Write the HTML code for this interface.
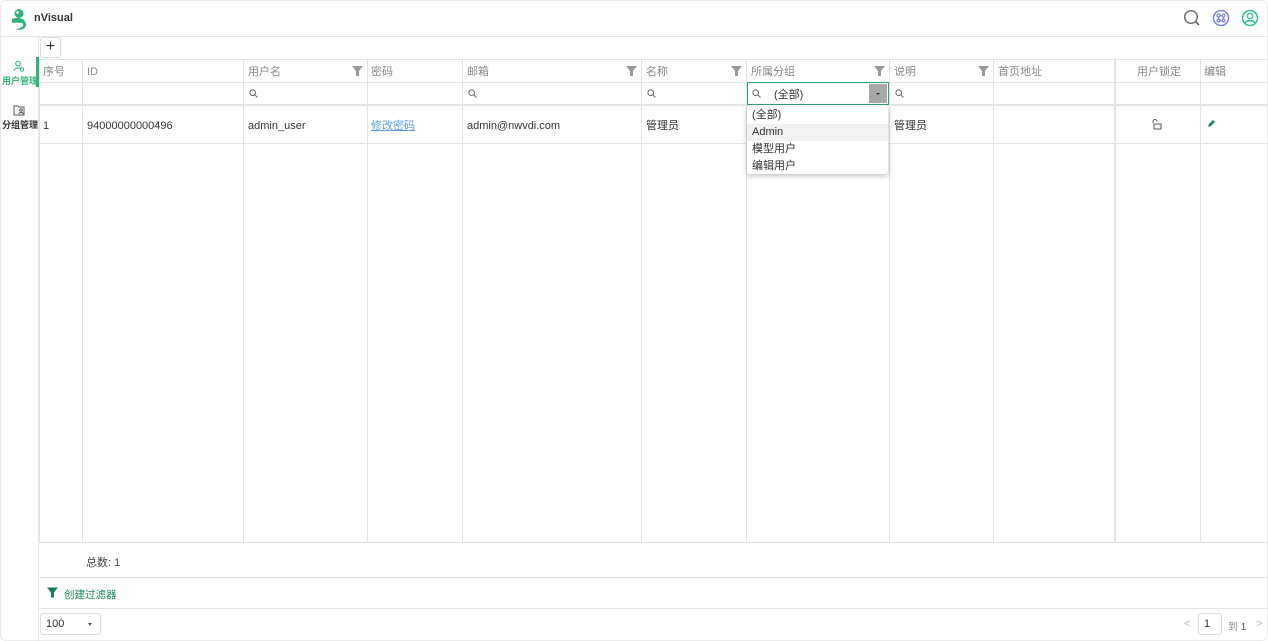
<!DOCTYPE html>
<html><head><meta charset="utf-8">
<style>
*{box-sizing:border-box;margin:0;padding:0}
body{width:1268px;height:641px;overflow:hidden;background:#fff;font-family:"Liberation Sans","Noto Sans CJK SC",sans-serif;font-size:11px;color:#333;position:relative}
.a{position:absolute}
.vl{position:absolute;top:60px;height:482px;width:1px;background:#e4e4e4}
.hl{position:absolute;left:39px;right:0;height:1px;background:#e4e4e4}
.th{position:absolute;top:61px;height:22px;line-height:22px;color:#888;font-size:11px}
.td{position:absolute;top:106px;height:38px;line-height:40px;font-size:11px;color:#333}
.flt{position:absolute;top:66px;width:11px;height:10px}
.srch{position:absolute;top:89px;width:9px;height:9px}
</style></head><body>
<div class="a" style="left:0;top:0;width:1268px;height:641px;border:1px solid #ececec;border-radius:6px"></div>
<div class="a" style="left:0;top:36px;width:1268px;height:1px;background:#e6e6e6"></div>
<svg class="a" style="left:10px;top:8px" width="20" height="22" viewBox="0 0 20 22"><circle cx="9" cy="5.5" r="4.5" fill="#2fb37a"/><circle cx="7.5" cy="4.5" r="1.4" fill="#fff"/><path d="M2 11c7-3 14 0 14 5.5s-7 6-11 4.5c3.5 0 7-1.2 7-3.5S9 14 2 15z" fill="#2fb37a"/><circle cx="11" cy="17" r="2.2" fill="#fff"/></svg>
<div class="a" style="left:34px;top:12px;font-size:11px;font-weight:bold;color:#333">nVisual</div>
<svg class="a" style="left:1183px;top:9px" width="18" height="18" viewBox="0 0 18 18"><circle cx="8" cy="8" r="6.3" fill="none" stroke="#666" stroke-width="1.4"/><path d="M12.5 12.5l3.5 3.5" stroke="#666" stroke-width="1.6"/></svg>
<svg class="a" style="left:1212px;top:9px" width="18" height="18" viewBox="0 0 18 18"><circle cx="9" cy="9" r="7.5" fill="none" stroke="#7b86d9" stroke-width="1.5"/><g fill="none" stroke="#7b86d9" stroke-width="1.2"><circle cx="6.5" cy="6.5" r="1.5"/><circle cx="11.5" cy="6.5" r="1.5"/><circle cx="6.5" cy="11.5" r="1.5"/><circle cx="11.5" cy="11.5" r="1.5"/><path d="M8 6.5h2M8 11.5h2M6.5 8v2M11.5 8v2"/></g></svg>
<svg class="a" style="left:1241px;top:9px" width="18" height="18" viewBox="0 0 18 18"><circle cx="9" cy="9" r="7.5" fill="none" stroke="#2fbf9a" stroke-width="1.5"/><circle cx="9" cy="7" r="2.6" fill="none" stroke="#2fbf9a" stroke-width="1.4"/><path d="M4 14c1.5-3 8.5-3 10 0" fill="none" stroke="#2fbf9a" stroke-width="1.4"/></svg>
<div class="a" style="left:38px;top:37px;width:1px;height:604px;background:#e6e6e6"></div>
<div class="a" style="left:36px;top:57px;width:3px;height:30px;background:#2fb37a"></div>
<svg class="a" style="left:13px;top:60px" width="12" height="12" viewBox="0 0 12 12"><circle cx="5" cy="3.5" r="2.3" fill="none" stroke="#2fb37a"/><path d="M1 11c0-3 6-4 7-2" fill="none" stroke="#2fb37a"/><circle cx="9" cy="9.5" r="1.6" fill="none" stroke="#2fb37a"/></svg>
<div class="a" style="left:2px;top:74px;font-size:9px;color:#2fb37a;font-weight:bold">用户管理</div>
<svg class="a" style="left:13px;top:104px" width="12" height="12" viewBox="0 0 12 12"><path d="M1 2h4l1 1h5v8H1z" fill="none" stroke="#555"/><circle cx="8" cy="6" r="1.3" fill="none" stroke="#555"/><path d="M6 10c0-2 4-2 4 0" fill="none" stroke="#555"/></svg>
<div class="a" style="left:2px;top:118px;font-size:9px;color:#333;font-weight:bold">分组管理</div>
<div class="a" style="left:40px;top:37px;width:21px;height:21px;border:1px solid #ddd;border-radius:3px;text-align:center;line-height:18px;font-size:16px;color:#333">+</div>
<div class="hl" style="top:59px"></div>
<div class="hl" style="top:82px"></div>
<div class="hl" style="top:104px;height:2px"></div>
<div class="hl" style="top:143px"></div>
<div class="hl" style="top:542px"></div>
<div class="hl" style="top:577px"></div>
<div class="hl" style="top:608px"></div>
<div class="vl" style="left:39px"></div>
<div class="vl" style="left:82px"></div>
<div class="vl" style="left:243px"></div>
<div class="vl" style="left:367px"></div>
<div class="vl" style="left:462px"></div>
<div class="vl" style="left:641px"></div>
<div class="vl" style="left:746px"></div>
<div class="vl" style="left:889px"></div>
<div class="vl" style="left:993px"></div>
<div class="vl" style="left:1114px;width:2px"></div>
<div class="vl" style="left:1200px"></div>
<div class="th" style="left:43px">序号</div>
<div class="th" style="left:87px">ID</div>
<div class="th" style="left:248px">用户名</div>
<div class="th" style="left:371px">密码</div>
<div class="th" style="left:467px">邮箱</div>
<div class="th" style="left:646px">名称</div>
<div class="th" style="left:751px">所属分组</div>
<div class="th" style="left:894px">说明</div>
<div class="th" style="left:998px">首页地址</div>
<div class="th" style="left:1137px">用户锁定</div>
<div class="th" style="left:1204px">编辑</div>
<svg class="flt" style="left:352px" viewBox="0 0 11 10"><path d="M0 0h11L7 5v5H4V5z" fill="#999"/></svg>
<svg class="flt" style="left:626px" viewBox="0 0 11 10"><path d="M0 0h11L7 5v5H4V5z" fill="#999"/></svg>
<svg class="flt" style="left:731px" viewBox="0 0 11 10"><path d="M0 0h11L7 5v5H4V5z" fill="#999"/></svg>
<svg class="flt" style="left:874px" viewBox="0 0 11 10"><path d="M0 0h11L7 5v5H4V5z" fill="#999"/></svg>
<svg class="flt" style="left:978px" viewBox="0 0 11 10"><path d="M0 0h11L7 5v5H4V5z" fill="#999"/></svg>
<svg class="srch" style="left:249px" viewBox="0 0 9 9"><circle cx="3.7" cy="3.7" r="2.8" fill="none" stroke="#666"/><path d="M5.8 5.8L8.5 8.5" stroke="#666"/></svg>
<svg class="srch" style="left:468px" viewBox="0 0 9 9"><circle cx="3.7" cy="3.7" r="2.8" fill="none" stroke="#666"/><path d="M5.8 5.8L8.5 8.5" stroke="#666"/></svg>
<svg class="srch" style="left:647px" viewBox="0 0 9 9"><circle cx="3.7" cy="3.7" r="2.8" fill="none" stroke="#666"/><path d="M5.8 5.8L8.5 8.5" stroke="#666"/></svg>
<svg class="srch" style="left:895px" viewBox="0 0 9 9"><circle cx="3.7" cy="3.7" r="2.8" fill="none" stroke="#666"/><path d="M5.8 5.8L8.5 8.5" stroke="#666"/></svg>
<div class="a" style="left:747px;top:82px;width:142px;height:23px;border:1px solid #2fa37a;background:#fff"></div>
<svg class="srch" style="left:752px" viewBox="0 0 9 9"><circle cx="3.7" cy="3.7" r="2.8" fill="none" stroke="#666"/><path d="M5.8 5.8L8.5 8.5" stroke="#666"/></svg>
<div class="a" style="left:774px;top:86px;font-size:11px;color:#333">(全部)</div>
<div class="a" style="left:869px;top:84px;width:18px;height:19px;background:#a8a8a8"></div>
<div class="a" style="left:876px;top:93px;border-left:2px solid transparent;border-right:2px solid transparent;border-top:2px solid #333"></div>
<div class="td" style="left:43px">1</div>
<div class="td" style="left:87px">94000000000496</div>
<div class="td" style="left:248px">admin_user</div>
<div class="td" style="left:371px;color:#5aa0e0;text-decoration:underline">修改密码</div>
<div class="td" style="left:467px">admin@nwvdi.com</div>
<div class="td" style="left:646px">管理员</div>
<div class="td" style="left:894px">管理员</div>
<svg class="a" style="left:1151px;top:119px" width="11" height="11" viewBox="0 0 11 11"><path d="M2 4V2.5a2 2 0 0 1 4 0" fill="none" stroke="#555"/><rect x="3" y="5" width="7" height="5" fill="none" stroke="#555"/></svg>
<svg class="a" style="left:1207px;top:119px" width="9" height="9" viewBox="0 0 9 9"><path d="M1 8l1-3 4-4 2 2-4 4z" fill="#1a8a5a"/></svg>
<div class="a" style="left:747px;top:105px;width:141px;height:69px;padding-top:2px;background:#fff;border-radius:3px;box-shadow:0 2px 6px rgba(0,0,0,.25)">
<div style="height:17px;line-height:17px;padding-left:5px;font-size:11px">(全部)</div>
<div style="height:17px;line-height:17px;padding-left:5px;font-size:11px;background:#f2f2f2">Admin</div>
<div style="height:17px;line-height:17px;padding-left:5px;font-size:11px">模型用户</div>
<div style="height:16px;line-height:17px;padding-left:5px;font-size:11px">编辑用户</div>
</div>
<div class="a" style="left:86px;top:554px;font-size:11px;color:#444">总数: 1</div>
<svg class="a" style="left:47px;top:587px" width="11" height="11" viewBox="0 0 11 10"><path d="M0 0h11L7 5v5H4V5z" fill="#1a7a55"/></svg>
<div class="a" style="left:64px;top:587px;font-size:10.5px;color:#1a8a5a">创建过滤器</div>
<div class="a" style="left:40px;top:613px;width:61px;height:22px;border:1px solid #ddd;border-radius:3px;padding-left:5px;line-height:20px;font-size:11px">100</div>
<div class="a" style="left:88px;top:623px;border-left:2px solid transparent;border-right:2px solid transparent;border-top:3px solid #555"></div>
<div class="a" style="left:1184px;top:618px;color:#bbb;font-size:11px">&lt;</div>
<div class="a" style="left:1198px;top:613px;width:24px;height:22px;border:1px solid #ddd;border-radius:3px;padding-left:5px;line-height:20px;font-size:11px">1</div>
<div class="a" style="left:1228px;top:618px;font-size:10px;color:#888">到 <span style="color:#555">1</span></div>
<div class="a" style="left:1256px;top:618px;color:#bbb;font-size:11px">&gt;</div>
</body></html>
